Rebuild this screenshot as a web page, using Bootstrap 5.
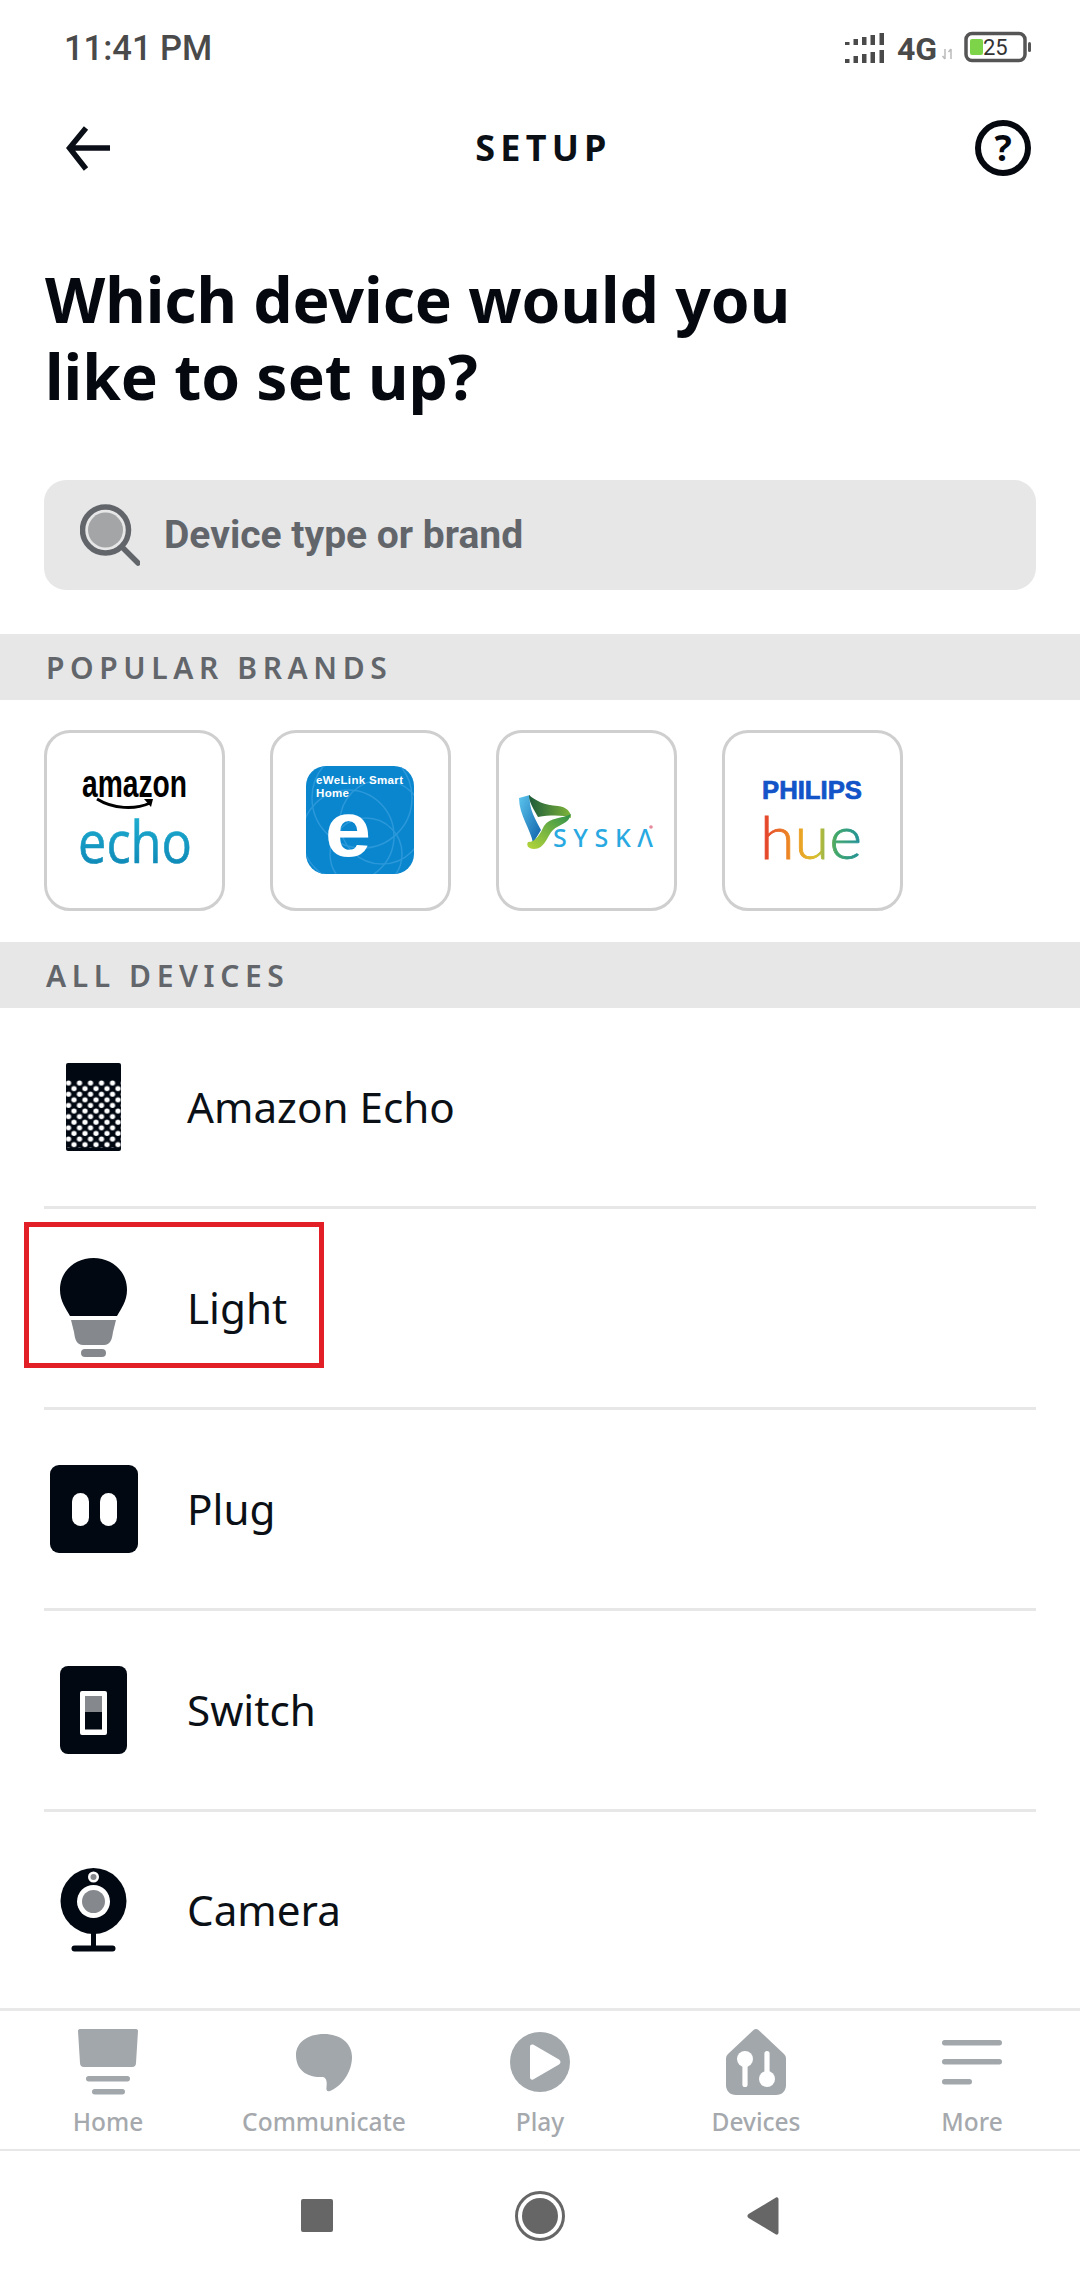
<!DOCTYPE html>
<html lang="en">
<head>
<meta charset="UTF-8" />
<meta name="viewport" content="width=device-width, initial-scale=1" />
<title>Setup</title>
<link href="https://cdn.jsdelivr.net/npm/bootstrap@5.3.3/dist/css/bootstrap.min.css" rel="stylesheet" />
<style>
  html, body { height: 100%; }
  body { background: #fff; color: #0b1016; font-family: "Noto Sans", sans-serif; }
  svg { display: block; }
  .page-shell { height: 2280px; position: relative; }
  .status-row { height: 96px; padding: 0 49px 0 64px; color: #4a4a4a; font: 500 34.500px Roboto, sans-serif; }
  .status-icons { width: 186px; height: 40px; }
  .status-4g { font: 700 32px Roboto, sans-serif; fill: #4a4a4a; }
  .status-batt { font: 400 22px Roboto, sans-serif; fill: #333; }
  .head-row { height: 104px; padding: 0 49px 0 66px; }
  .head-title { font-size: 36px; font-weight: 700; letter-spacing: 5.200px; line-height: 1; margin: 0; }
  .help-q { font: 700 36px "Noto Sans", sans-serif; fill: #05090f; }
  .page-title { font-size: 62.300px; font-weight: 700; line-height: 77px; margin: 60px 0 0 45px; color: #05090f; }
  .search-box { height: 110px; margin: 66px 44px 0; background: #e7e7e8; border-radius: 22px; padding-left: 36px; }
  .search-text { font: 700 39px Roboto, sans-serif; color: #62666b; margin-left: 24px; }
  .band-label { height: 66px; background: #e7e7e8; padding-left: 46px; color: #62666b; font-size: 30px; font-weight: 600; letter-spacing: 5.600px; }
  .band-top { margin-top: 44px; }
  .brand-row { padding: 30px 44px 31px 44px; gap: 45px; }
  .brand-tile { width: 181px; height: 181px; border: 3px solid #cfcfcf; border-radius: 26px; flex: none; }
  .t-amazon { font: 700 39px "Liberation Sans", sans-serif; fill: #000; }
  .t-echo { font: 400 58px "Open Sans", sans-serif; }
  .t-ewe { font: 700 11.500px "Liberation Sans", sans-serif; fill: #fff; }
  .t-e { font: 700 78px "Liberation Sans", sans-serif; fill: #fff; }
  .t-syska { font: 500 25px "Noto Sans", sans-serif; fill: #29a9e1; }
  .t-philips { font: 700 25px "Liberation Sans", sans-serif; fill: #1354c8; stroke: #1354c8; stroke-width: .7px; }
  .t-hue { font: 300 60px Lato, sans-serif; }
  .device-list { flex: 1 1 auto; }
  .device-list .device-row { height: 201px; margin: 0 44px; padding: 0; border: 0; border-bottom: 3px solid #e7e7e8; border-radius: 0; font-size: 42.200px; color: #0b1016; background: transparent; }
  .device-list .device-row:last-child { height: 196px; border-bottom: 0; }
  .device-slot { width: 99px; margin-right: 44px; flex: none; }
  .pick-box { position: absolute; left: 24px; top: 1222px; width: 300px; height: 146px; border: 5px solid #e21f26; pointer-events: none; }
  .tab-row { border-top: 3px solid #e9e9ea; border-bottom: 2px solid #e7e7e8; height: 143px; }
  .tab-cell { width: 216px; padding-top: 18px; color: #a5a9ad; font-size: 24.500px; font-weight: 500; line-height: 30px; }
  .tab-cell span { margin-top: 12px; }
  .sys-row { height: 129px; gap: 182px; }
</style>
</head>
<body>
<div class="page-shell d-flex flex-column">

  <!-- Status bar -->
  <div class="status-row d-flex align-items-center justify-content-between">
    <span>11:41 PM</span>
    <svg class="status-icons" viewBox="845 28 186 40">
      <g fill="#4a4a4a">
        <rect x="845" y="42" width="4.500" height="3"/><rect x="853.500" y="39" width="4.500" height="6"/><rect x="862" y="37" width="4.500" height="8"/><rect x="870.500" y="35" width="4.500" height="10"/><rect x="879.500" y="33" width="4.500" height="12"/>
        <rect x="845" y="59" width="4.500" height="4"/><rect x="853.500" y="56" width="4.500" height="7"/><rect x="862" y="54" width="4.500" height="9"/><rect x="870.500" y="52" width="4.500" height="11"/><rect x="879.500" y="50" width="4.500" height="13"/>
      </g>
      <text class="status-4g" x="897" y="60">4G</text>
      <path d="M945 49v10m-2.500-3l2.500 3M951 59V49m-2.500 3l2.500-3" stroke="#bbb" stroke-width="1.500" fill="none"/>
      <rect x="966" y="33.500" width="59" height="27" rx="6" fill="none" stroke="#555" stroke-width="3.500"/>
      <rect x="970" y="39" width="13" height="16" rx="2" fill="#7ed448"/>
      <text class="status-batt" x="983" y="55">25</text>
      <rect x="1028" y="42" width="3" height="10" rx="1.500" fill="#555"/>
    </svg>
  </div>

  <!-- Header -->
  <div class="head-row d-flex align-items-center justify-content-between">
    <svg width="46" height="46" viewBox="66 125 46 46"><path d="M110 148H72M86 128L69.500 148 86 169" fill="none" stroke="#0a0f17" stroke-width="5.500"/></svg>
    <h1 class="head-title">SETUP</h1>
    <svg width="56" height="56" viewBox="0 0 56 56"><circle cx="28" cy="28" r="25" fill="none" stroke="#05090f" stroke-width="6"/><text class="help-q" x="28" y="41" text-anchor="middle">?</text></svg>
  </div>

  <h2 class="page-title">Which device would you<br>like to set up?</h2>

  <div class="search-box d-flex align-items-center">
    <svg width="60" height="64" viewBox="80 505 60 64">
      <circle cx="105.500" cy="532" r="23" fill="none" stroke="#62666b" stroke-width="5.500"/>
      <circle cx="105.500" cy="532" r="17.500" fill="#a3a5a7"/>
      <path d="M123 550l15 15" stroke="#62666b" stroke-width="5.500" stroke-linecap="round"/>
    </svg>
    <span class="search-text">Device type or brand</span>
  </div>

  <div class="band-label band-top d-flex align-items-center">POPULAR BRANDS</div>

  <div class="brand-row d-flex">
    <div class="brand-tile">
      <svg width="175" height="175" viewBox="3 3 175 175">
        <defs><linearGradient id="echoFill" x1="0" y1="0" x2="0" y2="1"><stop offset="0" stop-color="#22b8d8"/><stop offset="1" stop-color="#0a7fb0"/></linearGradient></defs>
        <text class="t-amazon" x="38" y="67" textLength="105" lengthAdjust="spacingAndGlyphs">amazon</text>
        <path d="M53 69c16 10 38 11 53 4" fill="none" stroke="#000" stroke-width="3"/>
        <path d="M100 69l9 0-2 8z" fill="#000"/>
        <text class="t-echo" x="34" y="133" textLength="114" lengthAdjust="spacingAndGlyphs" fill="url(#echoFill)" stroke="url(#echoFill)" stroke-width=".6">echo</text>
      </svg>
    </div>
    <div class="brand-tile">
      <svg width="175" height="175" viewBox="3 3 175 175">
        <clipPath id="eweClip"><rect x="36" y="36" width="108" height="108" rx="20"/></clipPath>
        <rect x="36" y="36" width="108" height="108" rx="20" fill="#0a86cf"/>
        <g clip-path="url(#eweClip)" fill="none" stroke="#2b98d9" stroke-width="1.500">
          <circle cx="78" cy="106" r="46"/><circle cx="112" cy="92" r="42"/><circle cx="92" cy="68" r="50"/><circle cx="96" cy="124" r="36"/>
        </g>
        <text class="t-ewe" x="46" y="54" textLength="87">eWeLink Smart</text>
        <text class="t-ewe" x="46" y="67" textLength="33">Home</text>
        <text class="t-e" x="55" y="126" textLength="46" lengthAdjust="spacingAndGlyphs">e</text>
      </svg>
    </div>
    <div class="brand-tile">
      <svg width="175" height="175" viewBox="3 3 175 175">
        <defs>
          <linearGradient id="ribBlue" x1="0" y1="0" x2="1" y2="1"><stop offset="0" stop-color="#5cc6ee"/><stop offset="1" stop-color="#0d5fa8"/></linearGradient>
          <linearGradient id="ribDark" x1="0" y1="0" x2="1" y2="0"><stop offset="0" stop-color="#1c5a3a"/><stop offset="1" stop-color="#7fb53a"/></linearGradient>
          <linearGradient id="ribLight" x1="1" y1="0" x2="0" y2="1"><stop offset="0" stop-color="#2f8f4a"/><stop offset="1" stop-color="#b6d63a"/></linearGradient>
        </defs>
        <path d="M23 68L34 65C32 78 40 90 45 100L37 113C35 100 23 85 23 68Z" fill="url(#ribBlue)"/>
        <path d="M33 65C40 71 48 75 62 76C70 77 75 81 75 88C68 85 55 85 42 87C37 78 33 72 33 65Z" fill="url(#ribDark)"/>
        <path d="M75 84C73 94 63 94 57 100C51 106 49 119 38 119C32 119 30 115 32 112C40 112 44 104 48 96C54 87 66 89 75 84Z" fill="url(#ribLight)"/>
        <text class="t-syska" x="57" y="117" textLength="100">SYSKΛ</text>
        <circle cx="155" cy="97" r="1.800" fill="#e58a9a"/>
      </svg>
    </div>
    <div class="brand-tile">
      <svg width="175" height="175" viewBox="3 3 175 175">
        <defs><linearGradient id="hueFill" x1="0" y1="0" x2="1" y2="0"><stop offset="0" stop-color="#e2352c"/><stop offset=".35" stop-color="#ef9a22"/><stop offset=".55" stop-color="#d9c02e"/><stop offset=".75" stop-color="#3fa66a"/><stop offset="1" stop-color="#1f8f9c"/></linearGradient></defs>
        <text class="t-philips" x="40" y="69" textLength="100" lengthAdjust="spacingAndGlyphs">PHILIPS</text>
        <text class="t-hue" x="38" y="129" textLength="102" lengthAdjust="spacingAndGlyphs" fill="url(#hueFill)" stroke="url(#hueFill)" stroke-width=".8">hue</text>
      </svg>
    </div>
  </div>

  <div class="band-label d-flex align-items-center">ALL DEVICES</div>

  <div class="device-list list-group list-group-flush">
    <div class="list-group-item device-row d-flex align-items-center">
      <div class="device-slot d-flex justify-content-center">
        <svg width="55" height="88" viewBox="0 0 55 88">
          <defs><pattern id="speakerDots" x="2.500" y="17" width="11" height="11.200" patternUnits="userSpaceOnUse"><circle cx="0" cy="3" r="2.600" fill="#fff"/><circle cx="11" cy="3" r="2.600" fill="#fff"/><circle cx="5.500" cy="8.600" r="2.600" fill="#fff"/></pattern></defs>
          <rect width="55" height="88" rx="2" fill="#020812"/>
          <rect y="17" width="55" height="68" fill="url(#speakerDots)"/>
        </svg>
      </div>
      <span>Amazon Echo</span>
    </div>
    <div class="list-group-item device-row d-flex align-items-center">
      <div class="device-slot d-flex justify-content-center">
        <svg width="67" height="100" viewBox="0 0 67 100">
          <path d="M33.500 0C52 0 67 13 67 32C67 43 61 51 57 58H10C6 51 0 43 0 32C0 13 15 0 33.500 0Z" fill="#020812"/>
          <path d="M11 62H56L53 74C52 82 50 87 44 87H23C17 87 15 82 14 74Z" fill="#85888d"/>
          <rect x="21" y="91" width="25" height="8" rx="4" fill="#85888d"/>
        </svg>
      </div>
      <span>Light</span>
    </div>
    <div class="list-group-item device-row d-flex align-items-center">
      <div class="device-slot d-flex justify-content-center">
        <svg width="88" height="88" viewBox="0 0 88 88">
          <rect width="88" height="88" rx="9" fill="#020812"/>
          <rect x="22" y="28" width="17" height="33" rx="8.500" fill="#fff"/>
          <rect x="50" y="28" width="17" height="33" rx="8.500" fill="#fff"/>
        </svg>
      </div>
      <span>Plug</span>
    </div>
    <div class="list-group-item device-row d-flex align-items-center">
      <div class="device-slot d-flex justify-content-center">
        <svg width="67" height="88" viewBox="0 0 67 88">
          <rect width="67" height="88" rx="8" fill="#020812"/>
          <rect x="20" y="25" width="27" height="44" rx="2" fill="#fff"/>
          <rect x="25" y="30" width="17" height="16" fill="#85888d"/>
          <rect x="25" y="46" width="17" height="17.500" fill="#020812"/>
        </svg>
      </div>
      <span>Switch</span>
    </div>
    <div class="list-group-item device-row d-flex align-items-center">
      <div class="device-slot d-flex justify-content-center">
        <svg width="67" height="84" viewBox="0 0 67 84">
          <circle cx="33.500" cy="33" r="33" fill="#020812"/>
          <circle cx="33.500" cy="33.500" r="16.500" fill="#fff"/>
          <circle cx="33.500" cy="33.500" r="11.500" fill="#85888d"/>
          <circle cx="33.500" cy="9" r="5.500" fill="#fff"/>
          <circle cx="33.500" cy="9" r="3" fill="#85888d"/>
          <rect x="31" y="64" width="5" height="16" fill="#020812"/>
          <rect x="11.500" y="77.500" width="44" height="6" rx="3" fill="#020812"/>
        </svg>
      </div>
      <span>Camera</span>
    </div>
  </div>

  <!-- Bottom tabs -->
  <div class="tab-row d-flex">
    <div class="tab-cell d-flex flex-column align-items-center">
      <svg width="62" height="66" viewBox="0 0 62 66">
        <path d="M3 0H59C60.500 0 61 1 61 2L59 34C59 36 58 38 55 38H7C4 38 3 36 3 34L1 2C1 1 1.500 0 3 0Z" fill="#a2a7ab"/>
        <rect x="9" y="47" width="44" height="5.500" rx="2.700" fill="#a2a7ab"/>
        <rect x="15" y="60" width="33" height="5.500" rx="2.700" fill="#a2a7ab"/>
      </svg>
      <span>Home</span>
    </div>
    <div class="tab-cell d-flex flex-column align-items-center">
      <svg width="62" height="66" viewBox="0 0 62 66">
        <path d="M31 5C47 5 59 14 59 28C59 43 49 57 37 62C34 63 33 61 33.500 58C34 54 34 49 30 48C14 49 3 41 3 26C3 14 14 5 31 5Z" fill="#a2a7ab"/>
      </svg>
      <span>Communicate</span>
    </div>
    <div class="tab-cell d-flex flex-column align-items-center">
      <svg width="62" height="66" viewBox="0 0 62 66">
        <circle cx="31" cy="33" r="30" fill="#a2a7ab"/>
        <path d="M21 18C21 15.500 23 15 25 16L50 30.500C52 32 52 34 50 35.500L25 50C23 51.500 21 50.500 21 48Z" fill="#fff"/>
      </svg>
      <span>Play</span>
    </div>
    <div class="tab-cell d-flex flex-column align-items-center">
      <svg width="62" height="66" viewBox="0 0 62 66">
        <path d="M28.500 1C30 -.3 32 -.3 33.500 1L59 25C60.500 26.500 61 28 61 30V56C61 62 57 66 51 66H11C5 66 1 62 1 56V30C1 28 1.500 26.500 3 25Z" fill="#a2a7ab"/>
        <circle cx="20" cy="30" r="8" fill="#fff"/>
        <rect x="17.400" y="32" width="5.200" height="26" rx="2.600" fill="#fff"/>
        <circle cx="42" cy="50" r="8" fill="#fff"/>
        <rect x="39.400" y="22" width="5.200" height="26" rx="2.600" fill="#fff"/>
      </svg>
      <span>Devices</span>
    </div>
    <div class="tab-cell d-flex flex-column align-items-center">
      <svg width="62" height="66" viewBox="0 0 62 66">
        <rect x="1" y="11" width="60" height="5.500" rx="2.700" fill="#a2a7ab"/>
        <rect x="1" y="30" width="60" height="5.500" rx="2.700" fill="#a2a7ab"/>
        <rect x="1" y="50" width="30" height="5.500" rx="2.700" fill="#a2a7ab"/>
      </svg>
      <span>More</span>
    </div>
  </div>

  <!-- Android nav -->
  <div class="sys-row d-flex align-items-center justify-content-center">
    <svg width="32" height="33" viewBox="0 0 32 33"><rect width="32" height="33" rx="2" fill="#666"/></svg>
    <svg width="50" height="50" viewBox="0 0 50 50"><circle cx="25" cy="25" r="23.500" fill="none" stroke="#666" stroke-width="3"/><circle cx="25" cy="25" r="18" fill="#666"/></svg>
    <svg width="32" height="38" viewBox="0 0 32 38"><path d="M29 .5C30.500 0 31.500 1 31.500 2.500V35.500C31.500 37 30.500 38 29 37.500L1.500 21C0 20 0 18 1.500 17Z" fill="#666"/></svg>
  </div>

  <!-- Red highlight drawn over the Light row -->
  <div class="pick-box"></div>
</div>
<script src="https://cdn.jsdelivr.net/npm/bootstrap@5.3.3/dist/js/bootstrap.bundle.min.js"></script>
</body>
</html>
